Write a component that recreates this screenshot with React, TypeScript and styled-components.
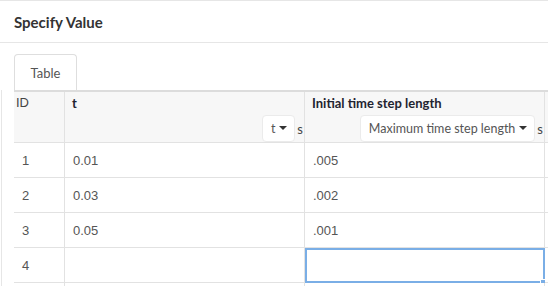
import styled, { createGlobalStyle } from 'styled-components';

const GlobalStyle = createGlobalStyle`
  html, body {
    margin: 0;
    padding: 0;
    background: #ffffff;
    font-family: Lato, "Liberation Sans", sans-serif;
    overflow: hidden;
  }
  * {
    box-sizing: border-box;
  }
`;

const Panel = styled.div`
  width: 548px;
  height: 286px;
  border-top: 1px solid #e6e6e6;
  display: flex;
  flex-direction: column;
  overflow: hidden;
`;

const Header = styled.div`
  height: 42px;
  flex-shrink: 0;
  display: flex;
  align-items: center;
  padding-left: 14px;
  border-bottom: 1px solid #e6e6e6;
  font-size: 15px;
  font-weight: 700;
  color: #333;
`;

const TabStrip = styled.div`
  display: flex;
  padding: 11px 0 0 14px;
`;

const Tab = styled.div`
  width: 63px;
  height: 36px;
  display: flex;
  align-items: center;
  justify-content: center;
  border: 1px solid #dedede;
  border-bottom: none;
  border-radius: 4px 4px 0 0;
  font-size: 13px;
  color: #555;
`;

const Sheet = styled.div`
  flex: 1;
  margin-left: 1px;
  border-left: 1px solid #e6e6e6;
  padding-left: 12px;
  overflow: hidden;
`;

const Grid = styled.div`
  display: grid;
  grid-template-columns: 51px 240px 240px 40px;
  grid-auto-rows: 35px;
  grid-template-rows: 51px;
  width: max-content;
  border-top: 2px solid #dcdcdc;
`;

const Cell = styled.div`
  position: relative;
  display: flex;
  align-items: center;
  padding-left: 8px;
  border-right: 1px solid #e2e2e2;
  border-bottom: 1px solid #e2e2e2;
  background: #ffffff;
  font-family: "Liberation Sans", Arial, sans-serif;
  font-size: 13px;
  color: #555;
`;

const HeadCell = styled.div<{ $plain?: boolean }>`
  display: flex;
  flex-direction: column;
  justify-content: space-between;
  padding: 3px 1px 0 ${({ $plain }) => ($plain ? '2px' : '7px')};
  border-right: 1px solid #e2e2e2;
  border-bottom: 1px solid #e2e2e2;
  background: #f7f7f7;
  font-size: 13px;
  font-family: ${({ $plain }) => ($plain ? '"Liberation Sans", Arial, sans-serif' : 'Lato, sans-serif')};
  font-weight: ${({ $plain }) => ($plain ? 400 : 700)};
  color: ${({ $plain }) => ($plain ? '#444' : '#1f2430')};
`;

const UnitRow = styled.div`
  display: flex;
  align-items: center;
  justify-content: flex-end;
  gap: 2px;
  font-weight: 400;
  color: #444;
`;

const Select = styled.div`
  height: 27px;
  display: flex;
  align-items: center;
  gap: 4px;
  padding: 0 7px 0 8px;
  background: #ffffff;
  border: 1px solid #ebebeb;
  border-radius: 4px;
  font-size: 12.5px;
  color: #555;
`;

const Caret = styled.span`
  width: 0;
  height: 0;
  border-left: 4px solid transparent;
  border-right: 4px solid transparent;
  border-top: 4px solid #333;
  margin-top: -1px;
`;

const Selection = styled.div`
  position: absolute;
  left: 0;
  top: 0;
  right: -1px;
  bottom: -1px;
  border: 2px solid #7aaee6;
`;

const Handle = styled.div`
  position: absolute;
  right: -4px;
  bottom: -5px;
  width: 7px;
  height: 7px;
  background: #7aaee6;
  border: 1px solid #ffffff;
`;

const rows = [
  ['1', '0.01', '.005'],
  ['2', '0.03', '.002'],
  ['3', '0.05', '.001'],
  ['4', '', ''],
  ['', '', ''],
];

export default function App() {
  return (
    <>
      <GlobalStyle />
      <Panel>
        <Header>Specify Value</Header>
        <TabStrip>
          <Tab>Table</Tab>
        </TabStrip>
        <Sheet>
          <Grid>
            <HeadCell $plain>ID</HeadCell>
            <HeadCell>
              <span>t</span>
              <UnitRow>
                <Select>
                  t <Caret />
                </Select>
                s
              </UnitRow>
            </HeadCell>
            <HeadCell>
              <span>Initial time step length</span>
              <UnitRow>
                <Select>
                  Maximum time step length <Caret />
                </Select>
                s
              </UnitRow>
            </HeadCell>
            <HeadCell />
            {rows.map((r, i) => [
              <Cell key={`a${i}`}>{r[0]}</Cell>,
              <Cell key={`b${i}`}>{r[1]}</Cell>,
              <Cell key={`c${i}`}>
                {r[2]}
                {i === 3 && (
                  <Selection>
                    <Handle />
                  </Selection>
                )}
              </Cell>,
              <Cell key={`d${i}`} />,
            ])}
          </Grid>
        </Sheet>
      </Panel>
    </>
  );
}
